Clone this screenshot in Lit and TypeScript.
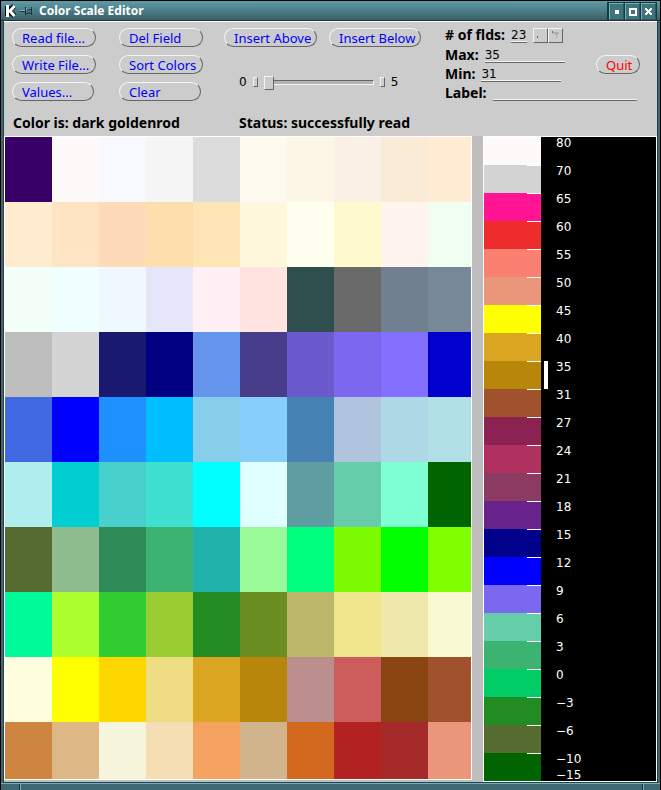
import { LitElement, html, css, svg } from "lit";
import { customElement, property, state } from "lit/decorators.js";
import { classMap } from "lit/directives/class-map.js";
import { styleMap } from "lit/directives/style-map.js";

const PALETTE: string[] = [
  "#380066", "snow", "ghostwhite", "whitesmoke", "gainsboro", "floralwhite", "oldlace", "linen", "antiquewhite", "#ffecd3",
  "blanchedalmond", "bisque", "peachpuff", "navajowhite", "moccasin", "cornsilk", "ivory", "lemonchiffon", "seashell", "honeydew",
  "mintcream", "azure", "aliceblue", "lavender", "lavenderblush", "mistyrose", "darkslategray", "dimgray", "slategray", "lightslategray",
  "#bebebe", "lightgray", "midnightblue", "navy", "cornflowerblue", "darkslateblue", "slateblue", "mediumslateblue", "#8470ff", "mediumblue",
  "royalblue", "blue", "dodgerblue", "deepskyblue", "skyblue", "lightskyblue", "steelblue", "lightsteelblue", "lightblue", "powderblue",
  "paleturquoise", "darkturquoise", "mediumturquoise", "turquoise", "cyan", "lightcyan", "cadetblue", "mediumaquamarine", "aquamarine", "darkgreen",
  "darkolivegreen", "darkseagreen", "seagreen", "mediumseagreen", "lightseagreen", "palegreen", "springgreen", "lawngreen", "lime", "chartreuse",
  "mediumspringgreen", "greenyellow", "limegreen", "yellowgreen", "forestgreen", "olivedrab", "darkkhaki", "khaki", "palegoldenrod", "lightgoldenrodyellow",
  "lightyellow", "yellow", "gold", "#eedd82", "goldenrod", "darkgoldenrod", "rosybrown", "indianred", "saddlebrown", "sienna",
  "peru", "burlywood", "beige", "wheat", "sandybrown", "tan", "chocolate", "firebrick", "brown", "darksalmon",
];

const SCALE: [string, string][] = [
  ["80", "snow"], ["70", "lightgray"], ["65", "deeppink"], ["60", "#ee2c2c"], ["55", "salmon"],
  ["50", "darksalmon"], ["45", "yellow"], ["40", "goldenrod"], ["35", "darkgoldenrod"], ["31", "sienna"],
  ["27", "#8b2252"], ["24", "#b03060"], ["21", "#8b3a62"], ["18", "#68228b"], ["15", "#00008b"],
  ["12", "blue"], ["9", "mediumslateblue"], ["6", "mediumaquamarine"], ["3", "mediumseagreen"],
  ["0", "#00cd66"], ["−3", "forestgreen"], ["−6", "darkolivegreen"], ["−10", "darkgreen"],
];

@customElement("pill-button")
export class PillButton extends LitElement {
  @property({ type: Boolean, reflect: true }) danger = false;

  static styles = css`
    :host { display: block; min-width: 0; }
    .pill {
      box-sizing: border-box;
      width: 100%;
      height: 19px;
      padding: 0 0 0 9px;
      border: 1px solid;
      border-color: #f4f4f4 #666 #666 #f4f4f4;
      border-radius: 10px;
      background: #ccc;
      color: #00f;
      font: 13px/16px "Noto Sans", sans-serif;
      text-align: left;
      white-space: nowrap;
    }
    .danger { color: #f00; }
  `;

  render() {
    return html`<button class=${classMap({ pill: true, danger: this.danger })}><slot></slot></button>`;
  }
}

@customElement("title-bar")
export class TitleBar extends LitElement {
  static styles = css`
    :host {
      display: flex;
      align-items: center;
      height: 19px;
      padding-left: 4px;
      background: linear-gradient(#5d9ba7, #3b6066);
      border-bottom: 1px solid #1f3236;
    }
    .icon { flex: none; }
    .title {
      flex: 1;
      margin: 0 0 0 5px;
      color: #fff;
      font: bold 12px/18px "Noto Sans", sans-serif;
    }
    .controls { display: flex; gap: 1px; margin-right: 3px; padding: 1px 1px 0 2px; background: #17383f; }
    .control {
      width: 15px;
      height: 17px;
      padding: 0;
      border: 1px solid;
      border-color: #6fb3c0 #2c555d #2c555d #6fb3c0;
      background: #3f737d;
      display: grid;
      place-items: center;
    }
  `;

  private control(label: string, shape: unknown) {
    return html`<button class="control" aria-label=${label}>
      <svg width="9" height="9" viewBox="0 0 9 9" shape-rendering="crispEdges">${shape}</svg>
    </button>`;
  }

  render() {
    return html`
      <svg class="icon" width="12" height="16" viewBox="0 0 12 16" aria-hidden="true">
        <path d="M2 3v10M9 3L4.500 8L9.500 13" fill="none" stroke="#000" stroke-width="5"/>
        <path d="M2.500 2v12M9.500 3L5 8L9.500 13" fill="none" stroke="#fff" stroke-width="3"/>
      </svg>
      <svg class="icon" width="17" height="12" viewBox="0 0 17 12" aria-hidden="true">
        <path d="M3 6.500h6M8.500 2v8M14.500 2v8M9 4l2 1h2l2-2M9 9l2-1h2l2 1" fill="none" stroke="#17353b"/>
        <path d="M3 5.500h5M9.500 3v2" fill="none" stroke="#80bcc7"/>
      </svg>
      <h1 class="title">Color Scale Editor</h1>
      <div class="controls">
        ${this.control("Iconify", svg`<path d="M3 3h4v4H3z" fill="#fff"/>`)}
        ${this.control("Maximize", svg`<path d="M2 2h6v6H2z" fill="none" stroke="#fff" stroke-width="2"/>`)}
        ${this.control("Close", svg`<path d="M1 1h2v1h1v1h1v-1h1v-1h2v2h-1v1h-1v1h1v1h1v2h-2v-1h-1v-1h-1v1h-1v1h-2v-2h1v-1h1v-1h-1v-1h-1z" fill="#fff"/>`)}
      </div>
    `;
  }
}

@customElement("control-panel")
export class ControlPanel extends LitElement {
  static styles = css`
    :host {
      display: grid;
      grid-template-columns: 84px 84px 196px 1fr;
      column-gap: 23px;
      padding: 6px 17px 0 8px;
      height: 108px;
      background: #ccc;
      border-top: 1px solid #fff;
      color: #000;
      font: 14px/14px "Noto Sans", sans-serif;
    }
    .stack { display: grid; gap: 8px; align-content: start; }
    .short { margin-right: 2px; }
    .middle { margin-left: -2px; }
    .pair { display: grid; grid-template-columns: 93px 92px; gap: 12px; }
    .slider { display: flex; align-items: center; margin: 27px 0 0 15px; font: 12px/16px "DejaVu Sans", sans-serif; }
    .stop {
      box-sizing: border-box;
      width: 5px;
      height: 10px;
      padding: 0;
      margin: 0 6px;
      border: 1px solid;
      border-color: #f4f4f4 #666 #666 #f4f4f4;
      background: #ccc;
    }
    .range { appearance: none; width: 110px; height: 14px; margin: 0; background: none; }
    .range::-webkit-slider-runnable-track {
      box-sizing: border-box;
      height: 5px;
      background: #b3b3b3;
      border-top: 1px solid #666;
      border-bottom: 1px solid #f4f4f4;
      border-right: 1px solid #f4f4f4;
    }
    .range::-webkit-slider-thumb {
      appearance: none;
      box-sizing: border-box;
      width: 10px;
      height: 14px;
      margin-top: -5px;
      border: 1px solid;
      border-color: #f4f4f4 #666 #666 #f4f4f4;
      border-radius: 1px;
      background: #ccc;
    }
    .right {
      display: grid;
      grid-template-columns: 1fr 44px;
      grid-template-rows: 20px 19px 19px 19px;
      align-content: start;
      font-weight: bold;
    }
    .field { grid-column: 1; display: flex; align-items: flex-start; gap: 6px; white-space: nowrap; }
    .full { grid-column: 1 / 3; }
    .entry {
      box-sizing: border-box;
      width: 80px;
      height: 15px;
      padding: 0;
      border: 0;
      border-bottom: 1px solid #666;
      box-shadow: inset 0 -1px #f4f4f4;
      background: none;
      font: 12px/14px "DejaVu Sans", sans-serif;
      color: #000;
    }
    .count { width: 16px; }
    .wide { width: 144px; }
    .step {
      box-sizing: border-box;
      width: 15px;
      height: 15px;
      padding: 0;
      border: 1px solid;
      border-color: #f4f4f4 #666 #666 #f4f4f4;
      background: #ccc;
      display: grid;
    }
    .steps { display: flex; }
    .quit { grid-column: 2; grid-row: 2 / 4; align-self: start; margin-top: 7px; }
    .note { align-self: end; margin: 0 0 6px 1px; font-weight: bold; white-space: nowrap; }
    .left-note { grid-column: 1 / 3; }
    .right-note { grid-column: 3 / 5; margin-left: 13px; }
  `;

  render() {
    return html`
      <div class="stack">
        <pill-button>Read file...</pill-button>
        <pill-button>Write File...</pill-button>
        <pill-button class="short">Values...</pill-button>
      </div>
      <div class="stack">
        <pill-button>Del Field</pill-button>
        <pill-button>Sort Colors</pill-button>
        <pill-button class="short">Clear</pill-button>
      </div>
      <div class="middle">
        <div class="pair">
          <pill-button>Insert Above</pill-button>
          <pill-button>Insert Below</pill-button>
        </div>
        <div class="slider">
          <span>0</span>
          <button class="stop" aria-label="Minimum"></button>
          <input class="range" type="range" min="0" max="5" .value=${"0"} aria-label="Interpolation" />
          <button class="stop" aria-label="Maximum"></button>
          <span>5</span>
        </div>
      </div>
      <div class="right">
        <div class="field">
          <label for="count"># of flds:</label>
          <input id="count" class="entry count" .value=${"23"} />
          <span class="steps">
            <button class="step" aria-label="More fields">
              <svg width="13" height="13" aria-hidden="true"><path d="M3 7h1v2H3z" fill="#666"/></svg>
            </button>
            <button class="step" aria-label="Fewer fields">
              <svg width="13" height="13" aria-hidden="true"><path d="M4 3h6v2h-1v1h-1v3h-1v-3h-1v-1H4z" fill="#b0b0b0"/><path d="M3 2h1v2H3z" fill="#666"/></svg>
            </button>
          </span>
        </div>
        <div class="field">
          <label for="max">Max:</label><input id="max" class="entry" .value=${"35"} />
        </div>
        <div class="field">
          <label for="min">Min:</label><input id="min" class="entry" .value=${"31"} />
        </div>
        <pill-button class="quit" danger>Quit</pill-button>
        <div class="field full">
          <label for="label">Label:</label><input id="label" class="entry wide" />
        </div>
      </div>
      <p class="note left-note">Color is: dark goldenrod</p>
      <p class="note right-note">Status: successfully read</p>
    `;
  }
}

@customElement("color-palette")
export class ColorPalette extends LitElement {
  static styles = css`
    :host {
      display: grid;
      grid-template-columns: repeat(9, 47fr) 43fr;
      grid-template-rows: repeat(9, 65px) 57px;
      border: 1px solid #fff;
    }
    .cell { border: 0; padding: 0; min-width: 0; }
  `;

  render() {
    return PALETTE.map(
      (color) => html`<button class="cell" aria-label=${color} style=${styleMap({ background: color })}></button>`,
    );
  }
}

@customElement("color-scale")
export class ColorScale extends LitElement {
  @state() private selected = 8;

  static styles = css`
    :host { display: block; border: 1px solid #fff; background: #000; color: #fff; }
    .band { display: flex; height: 28px; }
    .swatch { width: 57px; border: 0; padding: 0; display: flex; justify-content: flex-end; align-items: flex-start; }
    .tick { width: 14px; height: 1px; background: #fff; }
    .marker { width: 4px; margin: 0 8px 0 3px; }
    .on { background: #fff; }
    .values {
      display: flex;
      flex-direction: column;
      justify-content: space-between;
      font: 12px/12px "DejaVu Sans", sans-serif;
    }
  `;

  render() {
    return SCALE.map(
      ([value, color], i) => html`
        <div class="band">
          <button
            class="swatch"
            aria-label="Field ${value}"
            style=${styleMap({ background: color })}
            @click=${() => (this.selected = i)}
          ><span class="tick"></span></button>
          <span class=${classMap({ marker: true, on: i === this.selected })}></span>
          <span class="values">
            <span>${value}</span>
            ${i === SCALE.length - 1 ? html`<span>−15</span>` : null}
          </span>
        </div>
      `,
    );
  }
}

@customElement("app-root")
export class AppRoot extends LitElement {
  static styles = css`
    :host {
      display: flex;
      flex-direction: column;
      box-sizing: border-box;
      min-height: 100vh;
      border: 1px solid #000;
      background: #3f6972;
    }
    .body {
      margin: 0 2px;
      border: 1px solid #24444b;
      border-top: 0;
      background: #ccc;
    }
    .canvases { display: flex; align-items: flex-start; background: #bebebe; }
    .palette { flex: 466; }
    .scale { flex: 172; margin-left: 11px; }
    .frame { flex: 1; display: flex; min-height: 6px; border-top: 1px solid #6fb0bc; }
    .grip { width: 18px; border-right: 1px solid #17353b; box-shadow: 1px 0 #6fb0bc; }
    .end { width: 0; margin-right: 17px; }
    .grow { flex: 1; }
  `;

  render() {
    return html`
      <title-bar></title-bar>
      <main class="body">
        <control-panel></control-panel>
        <div class="canvases">
          <color-palette class="palette"></color-palette>
          <color-scale class="scale"></color-scale>
        </div>
      </main>
      <div class="frame"><span class="grip"></span><span class="grow"></span><span class="grip end"></span></div>
    `;
  }
}
